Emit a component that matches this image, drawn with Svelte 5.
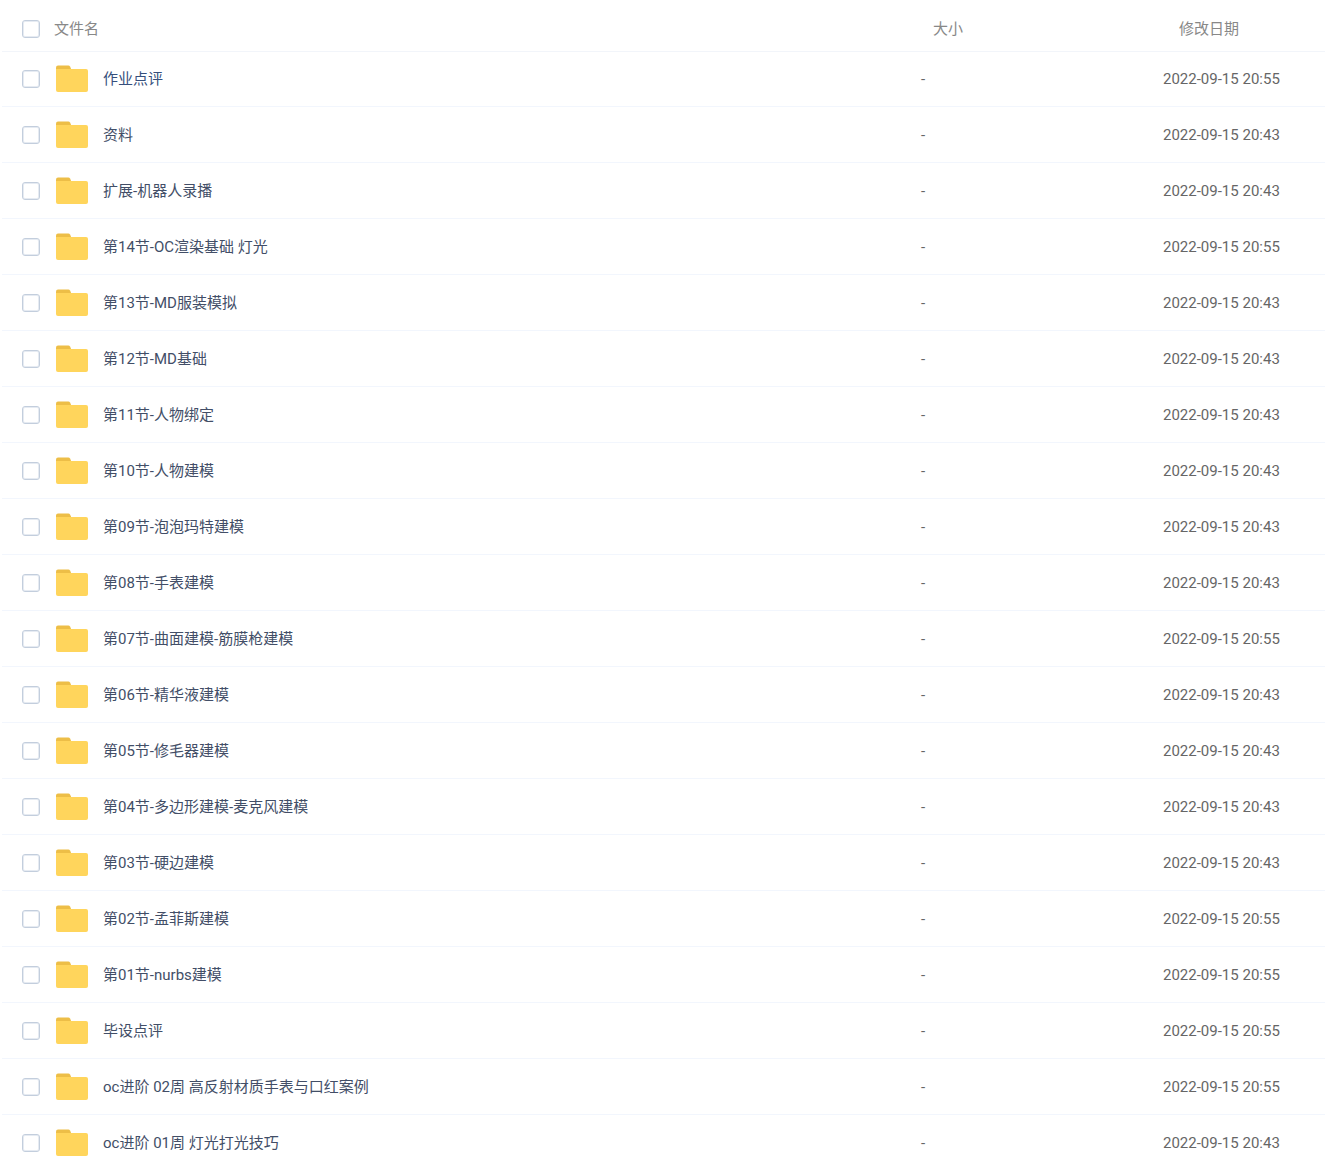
<script lang="ts">
  type FileRow = {
    name: string;
    size: string;
    modified: string;
    active?: boolean;
  };

  const files: FileRow[] = [
    { name: "作业点评", size: "-", modified: "2022-09-15 20:55", active: true },
    { name: "资料", size: "-", modified: "2022-09-15 20:43" },
    { name: "扩展-机器人录播", size: "-", modified: "2022-09-15 20:43" },
    { name: "第14节-OC渲染基础 灯光", size: "-", modified: "2022-09-15 20:55" },
    { name: "第13节-MD服装模拟", size: "-", modified: "2022-09-15 20:43" },
    { name: "第12节-MD基础", size: "-", modified: "2022-09-15 20:43" },
    { name: "第11节-人物绑定", size: "-", modified: "2022-09-15 20:43" },
    { name: "第10节-人物建模", size: "-", modified: "2022-09-15 20:43" },
    { name: "第09节-泡泡玛特建模", size: "-", modified: "2022-09-15 20:43" },
    { name: "第08节-手表建模", size: "-", modified: "2022-09-15 20:43" },
    { name: "第07节-曲面建模-筋膜枪建模", size: "-", modified: "2022-09-15 20:55" },
    { name: "第06节-精华液建模", size: "-", modified: "2022-09-15 20:43" },
    { name: "第05节-修毛器建模", size: "-", modified: "2022-09-15 20:43" },
    { name: "第04节-多边形建模-麦克风建模", size: "-", modified: "2022-09-15 20:43" },
    { name: "第03节-硬边建模", size: "-", modified: "2022-09-15 20:43" },
    { name: "第02节-孟菲斯建模", size: "-", modified: "2022-09-15 20:55" },
    { name: "第01节-nurbs建模", size: "-", modified: "2022-09-15 20:55" },
    { name: "毕设点评", size: "-", modified: "2022-09-15 20:55" },
    { name: "oc进阶 02周 高反射材质手表与口红案例", size: "-", modified: "2022-09-15 20:55" },
    { name: "oc进阶 01周 灯光打光技巧", size: "-", modified: "2022-09-15 20:43" },
  ];

  let selected = $state<string[]>([]);
  let allSelected = $derived(selected.length === files.length);

  function toggleAll() {
    selected = allSelected ? [] : files.map((file) => file.name);
  }
</script>

<main class="file-list">
  <table>
    <thead>
      <tr>
        <th class="check" scope="col">
          <input type="checkbox" aria-label="全选" checked={allSelected} onchange={toggleAll} />
        </th>
        <th class="name" scope="col">文件名</th>
        <th class="size" scope="col">大小</th>
        <th class="date" scope="col">修改日期</th>
      </tr>
    </thead>
    <tbody>
      {#each files as file (file.name)}
        <tr>
          <td class="check">
            <input type="checkbox" aria-label={file.name} value={file.name} bind:group={selected} />
          </td>
          <td class="name">
            <a href="#files" class:active={file.active}>
              <svg width="34" height="28" viewBox="0 0 34 28" aria-hidden="true">
                <path d="M1 10V2.400q0-2 2-2h10.500q1 0 1.500 1l1 2v6z" fill="#edbe47" />
                <path d="M1 4h30q2 0 2 2v19q0 2-2 2H3q-2 0-2-2z" fill="#ffd55c" />
              </svg>
              <span>{file.name}</span>
            </a>
          </td>
          <td class="size">{file.size}</td>
          <td class="date">{file.modified}</td>
        </tr>
      {/each}
    </tbody>
  </table>
</main>

<style>
  :global(html) {
    background: #fff;
    scrollbar-width: none;
  }

  .file-list {
    padding-left: 2px;
    font-family: Roboto, "Noto Sans CJK SC", sans-serif;
    font-size: 15px;
    line-height: 20px;
  }

  table {
    width: 100%;
    table-layout: fixed;
    border-collapse: separate;
    border-spacing: 0;
  }

  th,
  td {
    box-sizing: border-box;
    padding: 0;
    text-align: left;
    vertical-align: middle;
    white-space: nowrap;
  }

  th {
    height: 51px;
    padding-top: 6px;
    color: #888;
    font-weight: 400;
    box-shadow: 0 1px #f2f5fa;
  }

  td {
    height: 56px;
    color: #666;
    border-bottom: 1px solid #f2f6fd;
  }

  .check {
    width: 52px;
    padding-left: 20px;
  }

  .size {
    width: 242px;
  }

  th.size {
    padding-left: 12px;
  }

  .date {
    width: 162px;
  }

  th.date {
    padding-left: 16px;
  }

  input {
    appearance: none;
    display: block;
    box-sizing: border-box;
    width: 18px;
    height: 18px;
    margin: 0;
    border: 1px solid #c3cedd;
    border-radius: 3px;
    background: #fff;
    box-shadow: inset 0 0 0 1px #e6ebf2;
    cursor: pointer;
  }

  input:checked {
    border-color: #06a7ff;
    background: #06a7ff;
    box-shadow: none;
  }

  a {
    display: flex;
    align-items: center;
    gap: 14px;
    padding-left: 1px;
    color: #424e67;
    text-decoration: none;
  }

  a:hover,
  a.active {
    color: #364f7c;
  }

  a span {
    overflow: hidden;
    text-overflow: ellipsis;
  }

  svg {
    flex: none;
  }
</style>
